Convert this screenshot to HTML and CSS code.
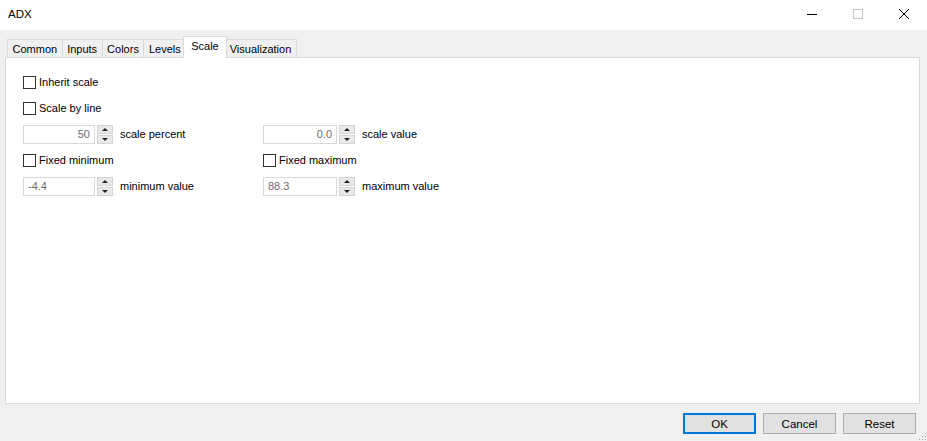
FILE: index.html
```html
<!DOCTYPE html>
<html lang="en">
<head>
<meta charset="UTF-8">
<title>ADX</title>
<link rel="stylesheet" href="styles.css">
</head>
<body>

<!-- Title bar -->
<div class="titlebar">
    <span class="title">ADX</span>
    <div class="win-buttons">
        <div class="win-btn">
            <svg width="10" height="10" viewBox="0 0 10 10"><rect x="0" y="5" width="10" height="1" fill="#000"/></svg>
        </div>
        <div class="win-btn">
            <svg width="10" height="10" viewBox="0 0 10 10"><rect x="0.5" y="0.5" width="9" height="9" fill="none" stroke="#c4c4c4"/></svg>
        </div>
        <div class="win-btn">
            <svg width="10" height="10" viewBox="0 0 10 10"><path d="M0 0L10 10M10 0L0 10" stroke="#000" stroke-width="1"/></svg>
        </div>
    </div>
</div>

<div class="dialog">
    <!-- Tabs -->
    <div class="tabs">
        <div class="tab">Common</div>
        <div class="tab">Inputs</div>
        <div class="tab">Colors</div>
        <div class="tab">Levels</div>
        <div class="tab active">Scale</div>
        <div class="tab">Visualization</div>
    </div>

    <div class="panel">
        <div class="form">
            <label class="check full"><span class="box"></span>Inherit scale</label>
            <label class="check full"><span class="box"></span>Scale by line</label>

            <div class="spin-row">
                <div class="spin"><span class="value right">50</span></div>
                <div class="arrows"><span class="up"></span><span class="down"></span></div>
                <span class="spin-label">scale percent</span>
            </div>
            <div class="spin-row">
                <div class="spin wide"><span class="value right">0.0</span></div>
                <div class="arrows"><span class="up"></span><span class="down"></span></div>
                <span class="spin-label">scale value</span>
            </div>

            <label class="check"><span class="box"></span>Fixed minimum</label>
            <label class="check"><span class="box"></span>Fixed maximum</label>

            <div class="spin-row">
                <div class="spin"><span class="value">-4.4</span></div>
                <div class="arrows"><span class="up"></span><span class="down"></span></div>
                <span class="spin-label">minimum value</span>
            </div>
            <div class="spin-row">
                <div class="spin wide"><span class="value">88.3</span></div>
                <div class="arrows"><span class="up"></span><span class="down"></span></div>
                <span class="spin-label">maximum value</span>
            </div>
        </div>
    </div>

    <!-- Buttons -->
    <div class="footer">
        <button class="btn default">OK</button>
        <button class="btn">Cancel</button>
        <button class="btn">Reset</button>
        <span class="grip"></span>
    </div>
</div>

</body>
</html>
```

FILE: styles.css
```css
body {
    margin: 0;
    width: 927px;
    height: 441px;
    background-color: #f0f0f0;
    font-family: "Liberation Sans", Arial, sans-serif;
    font-size: 11px;
    color: #000;
    overflow: hidden;
}

.titlebar {
    height: 30px;
    background-color: #fff;
    display: flex;
    align-items: center;
    justify-content: space-between;
}

.title {
    padding-left: 8px;
    font-size: 11.5px;
    padding-bottom: 2px;
}

.win-buttons {
    display: flex;
    height: 30px;
}

.win-btn {
    width: 46px;
    display: flex;
    align-items: center;
    justify-content: center;
    padding-bottom: 2px;
}

.dialog {
    position: relative;
    height: 411px;
}

.tabs {
    display: flex;
    align-items: flex-end;
    height: 27px;
    padding-left: 7px;
}

.tab {
    height: 17px;
    line-height: 18px;
    padding: 0 4.5px;
    border: 1px solid #d9d9d9;
    border-bottom: none;
    border-right: none;
    background-color: #f0f0f0;
}

.tab:last-child {
    border-right: 1px solid #d9d9d9;
}

.tab.active {
    height: 21px;
    line-height: 18px;
    padding: 0 7px;
    margin: 0 -2px -1px -2px;
    background-color: #fff;
    border-right: 1px solid #d9d9d9;
    position: relative;
    z-index: 1;
}

.tab.active + .tab {
    border-left: none;
    padding-left: 5px;
}

.panel {
    margin: 0 7px 0 5px;
    height: 345px;
    background-color: #fff;
    border: 1px solid #d9d9d9;
}

.form {
    display: grid;
    grid-template-columns: 240px auto;
    grid-auto-rows: 26px;
    padding: 11px 0 0 17px;
}

.check {
    display: flex;
    align-items: center;
    gap: 3px;
}

.check.full {
    grid-column: 1 / 3;
}

.box {
    width: 11px;
    height: 11px;
    border: 1px solid #333;
    background-color: #fff;
}

.spin-row {
    display: flex;
    align-items: center;
}

.spin {
    height: 17px;
    border: 1px solid #d9d9d9;
    display: flex;
    align-items: center;
    padding: 0 4px;
    width: 62px;
    color: #6d6d6d;
}

.spin.wide {
    width: 64px;
}

.value {
    flex: 1;
}

.value.right {
    text-align: right;
}

.arrows {
    margin-left: 2px;
    width: 16px;
    height: 19px;
    display: flex;
    flex-direction: column;
    gap: 1px;
}

.arrows span {
    flex: 1;
    background-color: #e9e9e9;
    border: 1px solid #d4d4d4;
    position: relative;
}

.arrows span::after {
    content: '';
    position: absolute;
    left: 4px;
    top: 2px;
    border-left: 3px solid transparent;
    border-right: 3px solid transparent;
}

.arrows .up::after {
    border-bottom: 3px solid #222;
}

.arrows .down::after {
    border-top: 3px solid #222;
}

.spin-label {
    margin-left: 7px;
}

.footer {
    display: flex;
    justify-content: flex-end;
    gap: 7px;
    padding: 9px 11px 0 0;
}

.btn {
    width: 73px;
    height: 21px;
    margin: 0;
    background-color: #e1e1e1;
    border: 1px solid #adadad;
    font-family: "Liberation Sans", Arial, sans-serif;
    font-size: 11.5px;
    color: #000;
    padding: 0;
}

.btn.default {
    border: 2px solid #0078d7;
}

/* resize grip in the corner */
.grip {
    position: absolute;
    right: 1px;
    bottom: 1px;
    width: 8px;
    height: 8px;
    background-image: radial-gradient(circle, #a0a0a0 0.8px, transparent 1px);
    background-size: 3px 3px;
    clip-path: polygon(100% 0, 100% 100%, 0 100%);
}
```
